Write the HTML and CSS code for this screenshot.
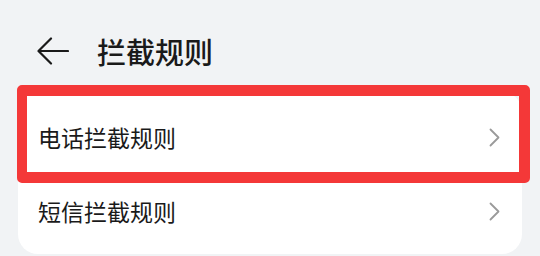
FILE: index.html
```html
<!DOCTYPE html>
<html lang="zh-CN">
<head>
    <meta charset="UTF-8">
    <meta name="viewport" content="width=device-width, initial-scale=1.0">
    <title>拦截规则</title>
    <link rel="stylesheet" href="styles.css">
</head>
<body>
    <!-- Title bar -->
    <div class="header">
        <svg class="back" width="32" height="28" viewBox="0 0 32 28">
            <path d="M2 14 H31 M14 1.5 L1.5 14 L14 26.5" fill="none" stroke="#1a1a1a" stroke-width="2.2" stroke-linecap="round" stroke-linejoin="round"/>
        </svg>
        <h1 class="title">拦截规则</h1>
    </div>

    <!-- Rule list -->
    <div class="card">
        <div class="highlight"></div>
        <div class="row">
            <span class="label">电话拦截规则</span>
            <svg class="chevron" width="11" height="19" viewBox="0 0 11 19">
                <path d="M1.5 1.5 L9.5 9.5 L1.5 17.5" fill="none" stroke="#9a9a9a" stroke-width="1.8" stroke-linecap="round" stroke-linejoin="round"/>
            </svg>
        </div>
        <div class="row">
            <span class="label">短信拦截规则</span>
            <svg class="chevron" width="11" height="19" viewBox="0 0 11 19">
                <path d="M1.5 1.5 L9.5 9.5 L1.5 17.5" fill="none" stroke="#9a9a9a" stroke-width="1.8" stroke-linecap="round" stroke-linejoin="round"/>
            </svg>
        </div>
    </div>
</body>
</html>
```

FILE: styles.css
```css
/* Page */
body {
    margin: 0;
    width: 540px;
    height: 256px;
    overflow: hidden;
    background-color: #f1f3f5;
    font-family: "Noto Sans CJK SC", "Noto Sans", sans-serif;
    color: #1a1a1a;
}

/* Title bar */
.header {
    display: flex;
    align-items: center;
    height: 54px;
    padding: 24px 0 0 37px;
}

.back {
    display: block;
    flex-shrink: 0;
}

.title {
    margin: 0 0 0 28px;
    font-size: 29px;
    font-weight: 500;
    line-height: 54px;
}

/* Card */
.card {
    position: relative;
    margin: 14px 18px 0;
    padding: 8px 0 6px;
    background-color: #fff;
    border-radius: 20px;
}

.row {
    display: flex;
    align-items: center;
    justify-content: space-between;
    height: 74px;
    padding: 0 22px 0 20px;
}

.label {
    font-size: 23px;
    line-height: 30px;
}

.chevron {
    display: block;
}

/* Red annotation frame */
.highlight {
    position: absolute;
    left: -1px;
    top: -7px;
    width: 492px;
    height: 76px;
    border: 11px solid #f43838;
    border-left-width: 10px;
    border-radius: 5px;
    pointer-events: none;
}
```
